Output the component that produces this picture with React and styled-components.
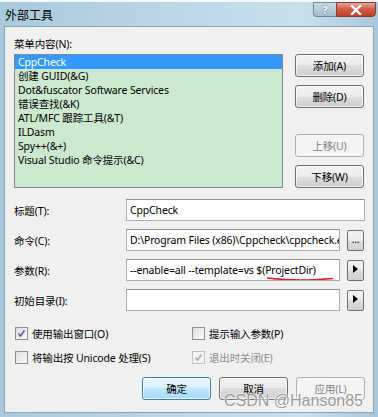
import React from "react";
import styled, { createGlobalStyle, css } from "styled-components";

const FONT = `"Noto Sans", "Noto Sans CJK SC", sans-serif`;

const items = [
  "CppCheck",
  "创建 GUID(&G)",
  "Dot&fuscator Software Services",
  "错误查找(&K)",
  "ATL/MFC 跟踪工具(&T)",
  "ILDasm",
  "Spy++(&+)",
  "Visual Studio 命令提示(&C)",
];

const fields = [
  { label: "标题(T):", value: "CppCheck", wide: true },
  { label: "命令(C):", value: "D:\\Program Files (x86)\\Cppcheck\\cppcheck.exe", side: "..." },
  { label: "参数(R):", value: "--enable=all --template=vs $(ProjectDir)", side: "arrow", mark: true },
  { label: "初始目录(I):", value: "", side: "arrow" },
];

export default function App() {
  return (
    <>
      <GlobalStyle />
      <Window>
        <TitleBar>
          <Title>外部工具</Title>
          <Caption>
            <HelpButton>?</HelpButton>
            <CloseButton>
              <svg width="12" height="10" viewBox="0 0 12 10">
                <path d="M2 1 L10 9 M10 1 L2 9" stroke="#fff" strokeWidth="2.4" strokeLinecap="square" />
              </svg>
            </CloseButton>
          </Caption>
        </TitleBar>
        <Client>
          <Label>菜单内容(N):</Label>
          <MenuRow>
            <ListBox>
              {items.map((item, i) => (
                <ListItem key={i} selected={i === 0}>{item}</ListItem>
              ))}
            </ListBox>
            <SideButtons>
              <Button>添加(A)</Button>
              <Button>删除(D)</Button>
              <Spacer />
              <Button disabled>上移(U)</Button>
              <Button>下移(W)</Button>
            </SideButtons>
          </MenuRow>
          <Form>
            {fields.map((f) => (
              <FieldRow key={f.label}>
                <FieldLabel>{f.label}</FieldLabel>
                <Input wide={f.wide}>
                  <InputText>{f.value}</InputText>
                  {f.mark && <Underline />}
                </Input>
                {f.side && (
                  <SmallButton>
                    {f.side === "..." ? (
                      "..."
                    ) : (
                      <svg width="5" height="8" viewBox="0 0 5 8">
                        <path d="M0 0 L5 4 L0 8 Z" fill="#000" />
                      </svg>
                    )}
                  </SmallButton>
                )}
              </FieldRow>
            ))}
          </Form>
          <Checks>
            <Check checked>使用输出窗口(O)</Check>
            <Check>提示输入参数(P)</Check>
            <Check>将输出按 Unicode 处理(S)</Check>
            <Check checked disabled>退出时关闭(E)</Check>
          </Checks>
          <Footer>
            <Button primary>确定</Button>
            <Button>取消</Button>
            <Button disabled>应用(L)</Button>
          </Footer>
          <Watermark>CSDN @Hanson85</Watermark>
        </Client>
      </Window>
    </>
  );
}

function Check({ checked, disabled, children }) {
  return (
    <CheckRow disabled={disabled}>
      <Box disabled={disabled}>
        {checked && (
          <svg width="9" height="9" viewBox="0 0 9 9">
            <path d="M1.5 4.5 L3.5 7 L7.5 1.5" fill="none" stroke={disabled ? "#a8a8a8" : "#4a5f97"} strokeWidth="1.5" />
          </svg>
        )}
      </Box>
      {children}
    </CheckRow>
  );
}

const GlobalStyle = createGlobalStyle`
  html, body { margin: 0; padding: 0; background: #fff; }
  body { font-family: ${FONT}; font-size: 10.5px; letter-spacing: -0.15px; color: #000; }
`;

const Window = styled.div`
  width: 378px;
  height: 417px;
  box-sizing: border-box;
  padding: 0 4px 4px 4px;
  display: flex;
  flex-direction: column;
  background: linear-gradient(90deg, #a9c9dc 0%, #bcd6e6 45%, #c8e0ee 80%, #a9c7da 100%);
  border-top: 2px solid #f4f8fb;
`;

const TitleBar = styled.div`
  height: 24px;
  display: flex;
  justify-content: space-between;
  align-items: flex-start;
`;

const Title = styled.div`
  font-family: "Noto Sans CJK SC", sans-serif;
  font-size: 12px;
  letter-spacing: 0;
  margin: 4px 0 0 1px;
  color: #000;
`;

const Caption = styled.div`
  display: flex;
  margin-right: -2px;
`;

const capBase = css`
  height: 15px;
  display: flex;
  align-items: center;
  justify-content: center;
  border: 1px solid #6f8797;
  box-sizing: border-box;
`;

const HelpButton = styled.div`
  ${capBase};
  width: 23px;
  border-radius: 0 0 0 4px;
  border-right: none;
  background: linear-gradient(#c8dbe6, #a4bccb);
  color: #fff;
  font-weight: bold;
  font-size: 11px;
  text-shadow: 0 0 2px #556;
`;

const CloseButton = styled.div`
  ${capBase};
  width: 40px;
  border-radius: 0 0 4px 0;
  border-color: #8a3a30;
  background: linear-gradient(#e6a699, #cf5a45 50%, #c2412c);
`;

const Client = styled.div`
  position: relative;
  flex: 1;
  background: #f0f0f0;
  border: 1px solid #8ea4b4;
  padding: 10px 8px 0 9px;
  box-sizing: border-box;
`;

const Label = styled.div`
  height: 17px;
  line-height: 14px;
`;

const MenuRow = styled.div`
  display: flex;
  gap: 12px;
`;

const ListBox = styled.div`
  width: 269px;
  height: 134px;
  box-sizing: border-box;
  border: 1px solid #828790;
  background: #cce8cf;
`;

const ListItem = styled.div`
  height: 14px;
  line-height: 14px;
  padding-left: 3px;
  white-space: nowrap;
  color: ${(p) => (p.selected ? "#fff" : "#000")};
  background: ${(p) => (p.selected ? "#3399ff" : "transparent")};
`;

const SideButtons = styled.div`
  display: flex;
  flex-direction: column;
  gap: 8px;
`;

const Spacer = styled.div`
  height: 10px;
`;

const Button = styled.div`
  width: 69px;
  height: 23px;
  box-sizing: border-box;
  display: flex;
  align-items: center;
  justify-content: center;
  border-radius: 3px;
  border: 1px solid ${(p) => (p.disabled ? "#adb2b5" : p.primary ? "#3c7fb1" : "#707070")};
  color: ${(p) => (p.disabled ? "#838383" : "#000")};
  background: ${(p) =>
    p.disabled
      ? "#f4f4f4"
      : p.primary
      ? "linear-gradient(#eaf6fd 0%, #d9f0fc 50%, #bee6fd 50%, #a7d9f5 100%)"
      : "linear-gradient(#f2f2f2 0%, #ebebeb 50%, #dddddd 50%, #cfcfcf 100%)"};
  box-shadow: inset 0 0 0 1px ${(p) => (p.disabled ? "transparent" : "rgba(255,255,255,0.7)")};
`;

const Form = styled.div`
  display: flex;
  flex-direction: column;
  gap: 8px;
  margin-top: 11px;
`;

const FieldRow = styled.div`
  display: flex;
  align-items: center;
  height: 22px;
`;

const FieldLabel = styled.div`
  width: 112px;
`;

const Input = styled.div`
  position: relative;
  width: ${(p) => (p.wide ? "239px" : "214px")};
  height: 22px;
  box-sizing: border-box;
  border: 1px solid #abadb3;
  border-top-color: #8e9297;
  background: #fff;
  overflow: hidden;
  display: flex;
  align-items: center;
  padding-left: 3px;
`;

const InputText = styled.span`
  white-space: nowrap;
`;

const Underline = styled.svg.attrs({
  width: 68,
  height: 8,
  viewBox: "0 0 68 8",
  children: <path d="M1 2 C10 3 20 4 35 4 S60 3 67 2.5" stroke="#e0191c" strokeWidth="1.6" fill="none" />,
})`
  position: absolute;
  left: 139px;
  top: 16px;
`;

const SmallButton = styled.div`
  margin-left: 7px;
  width: 17px;
  height: 21px;
  box-sizing: border-box;
  border: 1px solid #707070;
  border-radius: 2px;
  background: linear-gradient(#f2f2f2 0%, #ebebeb 50%, #dddddd 50%, #cfcfcf 100%);
  display: flex;
  align-items: center;
  justify-content: center;
  font-size: 10px;
  line-height: 8px;
  padding-bottom: 3px;
`;

const Checks = styled.div`
  display: grid;
  grid-template-columns: 177px 1fr;
  row-gap: 10px;
  margin-top: 15px;
  padding-left: 1px;
`;

const CheckRow = styled.div`
  display: flex;
  align-items: center;
  gap: 4px;
  height: 14px;
  color: ${(p) => (p.disabled ? "#8d8d8d" : "#000")};
`;

const Box = styled.div`
  width: 13px;
  height: 13px;
  box-sizing: border-box;
  border: 1px solid ${(p) => (p.disabled ? "#c0c0c0" : "#8f8f8f")};
  background: ${(p) => (p.disabled ? "#f4f4f4" : "linear-gradient(135deg, #dcdcdc, #fbfbfb)")};
  display: flex;
  align-items: center;
  justify-content: center;
`;

const Footer = styled.div`
  display: flex;
  justify-content: flex-end;
  gap: 8px;
  margin-top: 13px;
`;

const Watermark = styled.div`
  position: absolute;
  right: 10px;
  bottom: 2px;
  font-family: "Liberation Sans", sans-serif;
  font-size: 16px;
  letter-spacing: 0;
  color: #9a9a9a;
  text-shadow: 0 0 2px #fff, 0 0 2px #fff;
`;
